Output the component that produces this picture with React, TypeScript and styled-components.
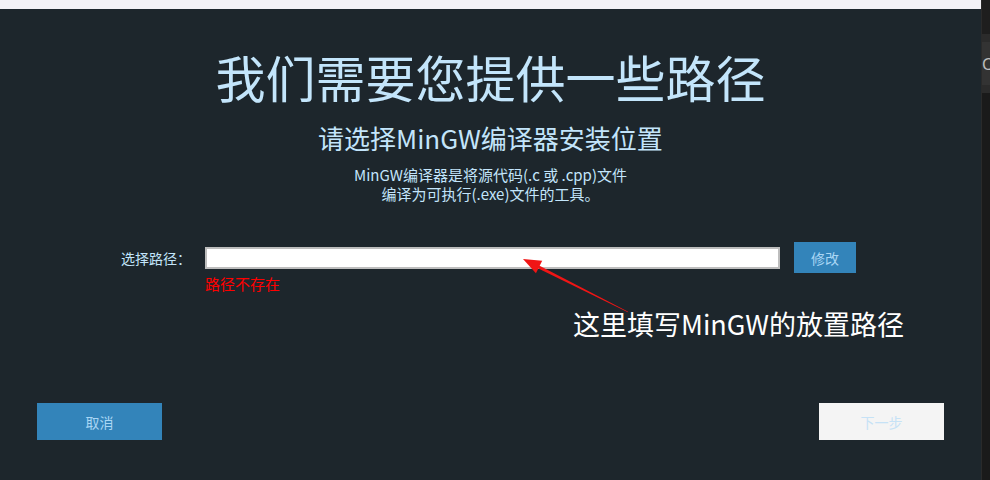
import React from "react";
import styled, { createGlobalStyle } from "styled-components";

const Global = createGlobalStyle`
  html, body { margin: 0; padding: 0; background: #1d262c; }
  body { font-family: "Noto Sans CJK SC", "Noto Sans", sans-serif; }
  * { box-sizing: border-box; }
`;

const Frame = styled.div`
  display: flex;
  width: 990px;
  height: 480px;
  overflow: hidden;
`;

const Main = styled.div`
  width: 981px;
  display: flex;
  flex-direction: column;
`;

const TopBar = styled.div`
  height: 9px;
  background: #f2f1f6;
`;

const Panel = styled.div`
  position: relative;
  flex: 1;
  background: #1d262c;
  display: flex;
  flex-direction: column;
  align-items: center;
  padding-top: 37px;
  color: #c0e3fa;
`;

const Title = styled.h1`
  margin: 0;
  font-size: 50px;
  font-weight: 400;
  line-height: 60px;
  color: #c3e5fb;
`;

const Subtitle = styled.h2`
  margin: 14px 0 0;
  font-size: 26px;
  font-weight: 400;
  line-height: 36px;
  color: #c3e5fb;
`;

const Desc = styled.p`
  margin: 9px 0 0;
  font-size: 15px;
  line-height: 19px;
  text-align: center;
  color: #c3e5fb;
`;

const PathGrid = styled.div`
  margin: 39px 0 0 -12px;
  display: grid;
  grid-template-columns: 78px 575px 62px;
  column-gap: 14px;
  align-items: center;
`;

const Label = styled.label`
  font-size: 14px;
  text-align: right;
  white-space: nowrap;
  color: #c3e5fb;
`;

const PathInput = styled.input`
  height: 22px;
  width: 575px;
  border: 2px solid #bdbdbd;
  background: #fff;
  outline: none;
  margin: 0;
`;

const Button = styled.button<{ $light?: boolean }>`
  border: none;
  padding: 0;
  font-family: inherit;
  font-size: 14px;
  background: ${(p) => (p.$light ? "#f4f4f4" : "#3384ba")};
  color: ${(p) => (p.$light ? "#c6e2f6" : "#a9d6f4")};
  cursor: pointer;
`;

const SmallButton = styled(Button)`
  width: 62px;
  height: 31px;
`;

const ErrorText = styled.div`
  grid-column: 2;
  font-size: 15px;
  line-height: 18px;
  color: #ff0000;
  margin-top: 2px;
`;

const Footer = styled.div`
  margin-top: auto;
  margin-bottom: 40px;
  align-self: stretch;
  display: flex;
  justify-content: space-between;
  padding: 0 37px;
`;

const BigButton = styled(Button)`
  width: 125px;
  height: 37px;
`;

const Note = styled.div`
  position: absolute;
  left: 573px;
  top: 297px;
  font-size: 27px;
  line-height: 36px;
  color: #ffffff;
  white-space: nowrap;
`;

const ArrowSvg = styled.svg`
  position: absolute;
  left: 0;
  top: 0;
  pointer-events: none;
`;

const Side = styled.div`
  width: 9px;
  background: #1a1a1a;
  border-left: 1px solid #2a2a2a;
  display: flex;
  flex-direction: column;
`;

const SideTop = styled.div`
  height: 34px;
  background: #1e1e1e;
`;

const SideTab = styled.div`
  height: 59px;
  background: #333333;
  border-top: 8px solid #2b2b2b;
  border-bottom: 8px solid #2b2b2b;
  overflow: hidden;
  display: flex;
  align-items: center;
  font-family: "Noto Sans", sans-serif;
  font-size: 16px;
  color: #bdbdbd;
`;

export default function App() {
  // arrow coordinates relative to panel (panel top at y=9)
  const oy = 9;
  const tip = [523, 259 - oy];
  const tail = [628, 312 - oy];
  const dx = tip[0] - tail[0];
  const dy = tip[1] - tail[1];
  const len = Math.hypot(dx, dy);
  const ux = dx / len;
  const uy = dy / len;
  const px = -uy;
  const py = ux;
  const base = [tip[0] - 18 * ux, tip[1] - 18 * uy];
  const shaftEnd = [tip[0] - 14 * ux, tip[1] - 14 * uy];
  const pts = (arr: number[][]) => arr.map((p) => p.join(",")).join(" ");
  const shaft = pts([
    [tail[0] + 0.3 * px, tail[1] + 0.3 * py],
    [shaftEnd[0] + 1.6 * px, shaftEnd[1] + 1.6 * py],
    [shaftEnd[0] - 1.6 * px, shaftEnd[1] - 1.6 * py],
    [tail[0] - 0.3 * px, tail[1] - 0.3 * py],
  ]);
  const head = pts([
    tip,
    [base[0] + 7 * px, base[1] + 7 * py],
    [base[0] - 7 * px, base[1] - 7 * py],
  ]);

  return (
    <>
      <Global />
      <Frame>
        <Main>
          <TopBar />
          <Panel>
            <Title>我们需要您提供一些路径</Title>
            <Subtitle>请选择MinGW编译器安装位置</Subtitle>
            <Desc>
              MinGW编译器是将源代码(.c 或 .cpp)文件
              <br />
              编译为可执行(.exe)文件的工具。
            </Desc>
            <PathGrid>
              <Label>选择路径：</Label>
              <PathInput type="text" />
              <SmallButton>修改</SmallButton>
              <ErrorText>路径不存在</ErrorText>
            </PathGrid>
            <Footer>
              <BigButton>取消</BigButton>
              <BigButton $light>下一步</BigButton>
            </Footer>
            <ArrowSvg width="981" height="471" viewBox="0 0 981 471">
              <polygon points={shaft} fill="#f01515" />
              <polygon points={head} fill="#f01515" />
            </ArrowSvg>
            <Note>这里填写MinGW的放置路径</Note>
          </Panel>
        </Main>
        <Side>
          <SideTop />
          <SideTab>C</SideTab>
        </Side>
      </Frame>
    </>
  );
}
